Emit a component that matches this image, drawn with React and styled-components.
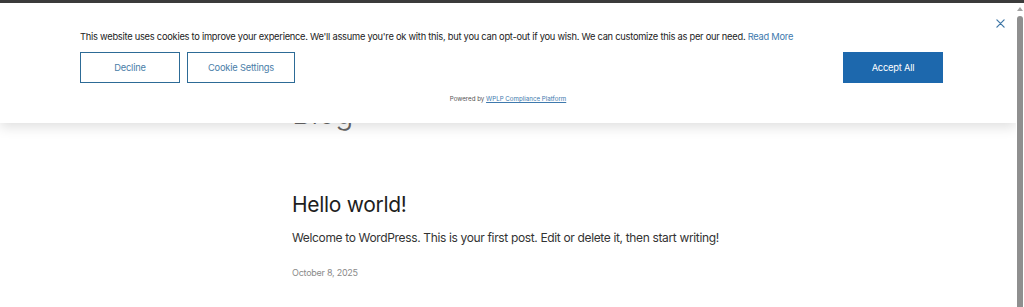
import React from 'react';
import styled, { createGlobalStyle } from 'styled-components';

const GlobalStyle = createGlobalStyle`
  html, body {
    margin: 0;
    padding: 0;
    overflow: hidden;
    background: #fff;
  }
  body {
    font-family: 'Inter', 'Noto Sans', sans-serif;
    -webkit-font-smoothing: antialiased;
  }
`;

const Window = styled.div`
  width: 1024px;
  height: 307px;
  display: flex;
  flex-direction: column;
`;

const TopStrip = styled.div`
  height: 3px;
  background: #3b3b3b;
  flex-shrink: 0;
`;

const Frame = styled.div`
  flex: 1;
  display: flex;
  min-height: 0;
`;

const Page = styled.div`
  flex: 1;
  position: relative;
  overflow: hidden;
  background: #fff;
`;

const ScrollTrack = styled.div`
  width: 8px;
  background: #fff;
  display: flex;
  flex-direction: column;
  align-items: center;
  padding-top: 4px;
  gap: 5px;
`;

const ScrollArrow = styled.div`
  width: 0;
  height: 0;
  border-left: 3px solid transparent;
  border-right: 3px solid transparent;
  border-bottom: 4px solid #a3a3a3;
`;

const ScrollThumb = styled.div`
  flex: 1;
  width: 6px;
  border-radius: 3px 3px 0 0;
  background: #8f8f8f;
`;

const Main = styled.main`
  width: 432px;
  margin: 0 auto;
  padding-top: 92px;
  display: flex;
  flex-direction: column;
`;

const PageTitle = styled.h1`
  margin: 0;
  font-size: 30px;
  line-height: 36px;
  font-weight: 300;
  color: #666;
  letter-spacing: -0.3px;
`;

const Post = styled.article`
  margin-top: 60px;
  display: flex;
  flex-direction: column;
`;

const PostTitle = styled.h2`
  margin: 0;
  font-size: 21px;
  line-height: 28px;
  font-weight: 400;
  color: #1e1e1e;
  letter-spacing: -0.3px;
`;

const Excerpt = styled.p`
  margin: 9px 0 0;
  font-size: 12px;
  line-height: 20px;
  color: #333;
  letter-spacing: -0.35px;
  white-space: nowrap;
`;

const PostDate = styled.time`
  margin-top: 18px;
  font-size: 9px;
  line-height: 14px;
  color: #8a8a8a;
  letter-spacing: -0.25px;
`;

const Banner = styled.section`
  position: absolute;
  top: 0;
  left: 0;
  right: 0;
  height: 120px;
  box-sizing: border-box;
  padding: 27px 73px 0 80px;
  background: #fff;
  box-shadow: 0 4px 12px rgba(0, 0, 0, 0.13);
  display: flex;
  flex-direction: column;
  z-index: 2;
`;

const Message = styled.p`
  margin: 0;
  font-size: 9.3px;
  line-height: 14px;
  color: #222;
  letter-spacing: -0.25px;
  white-space: nowrap;
`;

const Link = styled.a`
  color: #3e79ad;
  text-decoration: none;
`;

const ButtonRow = styled.div`
  margin-top: 8px;
  display: flex;
  align-items: center;
  justify-content: space-between;
`;

const ButtonGroup = styled.div`
  display: flex;
  gap: 7px;
`;

const Button = styled.button`
  width: ${(p) => p.$width}px;
  height: 31px;
  box-sizing: border-box;
  font-family: inherit;
  font-size: 9.3px;
  letter-spacing: -0.2px;
  cursor: pointer;
  border: 1.5px solid;
  background: ${(p) => (p.$primary ? '#1d68ad' : '#fff')};
  color: ${(p) => (p.$primary ? '#fff' : '#4a7ea8')};
  border-color: ${(p) => (p.$primary ? '#1d68ad' : '#2d6b96')};
`;

const Powered = styled.div`
  margin-top: 11px;
  margin-right: -73px;
  margin-left: -80px;
  text-align: center;
  font-size: 6.2px;
  line-height: 9px;
  color: #555;
`;

const PoweredLink = styled.a`
  color: #3e79ad;
  text-decoration: underline;
`;

const Close = styled.button`
  position: absolute;
  top: 12px;
  right: 8px;
  width: 16px;
  height: 16px;
  padding: 0;
  border: none;
  background: transparent;
  display: flex;
  align-items: center;
  justify-content: center;
  cursor: pointer;
`;

const CookieBanner = () => (
  <Banner>
    <Message>
      This website uses cookies to improve your experience. We'll assume you're ok with this, but you can opt-out if
      you wish. We can customize this as per our need. <Link href="#">Read More</Link>
    </Message>
    <ButtonRow>
      <ButtonGroup>
        <Button $width={100}>Decline</Button>
        <Button $width={108}>Cookie Settings</Button>
      </ButtonGroup>
      <Button $primary $width={100}>Accept All</Button>
    </ButtonRow>
    <Powered>
      Powered by <PoweredLink href="#">WPLP Compliance Platform</PoweredLink>
    </Powered>
    <Close aria-label="Close">
      <svg width="9" height="9" viewBox="0 0 10 10">
        <path d="M1 1 L9 9 M9 1 L1 9" stroke="#3f77a6" strokeWidth="1.4" strokeLinecap="round" />
      </svg>
    </Close>
  </Banner>
);

export default function App() {
  return (
    <>
      <GlobalStyle />
      <Window>
        <TopStrip />
        <Frame>
          <Page>
            <Main>
              <PageTitle>Blog</PageTitle>
              <Post>
                <PostTitle>Hello world!</PostTitle>
                <Excerpt>Welcome to WordPress. This is your first post. Edit or delete it, then start writing!</Excerpt>
                <PostDate>October 8, 2025</PostDate>
              </Post>
            </Main>
            <CookieBanner />
          </Page>
          <ScrollTrack>
            <ScrollArrow />
            <ScrollThumb />
          </ScrollTrack>
        </Frame>
      </Window>
    </>
  );
}
